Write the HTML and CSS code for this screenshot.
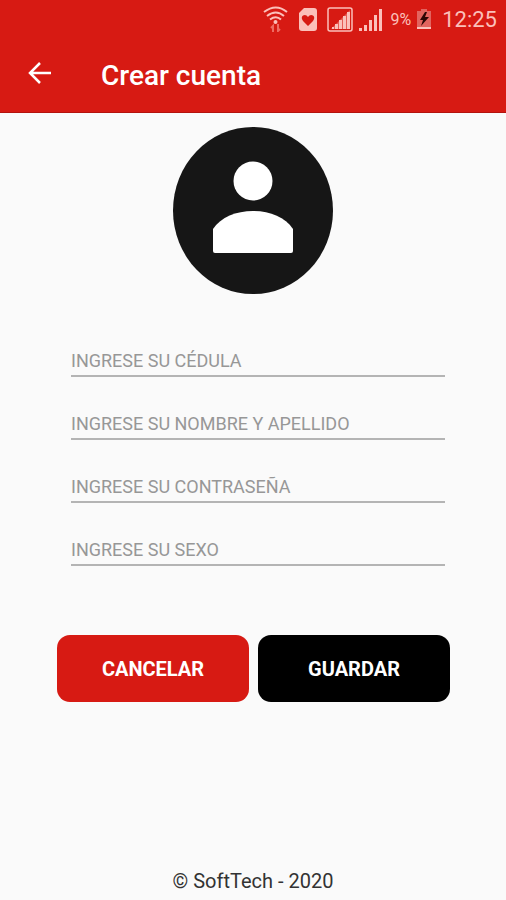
FILE: index.html
```html
<!DOCTYPE html>
<html lang="es">
  <head>
    <meta charset="utf-8" />
    <meta name="viewport" content="width=device-width, initial-scale=1" />
    <title>Crear cuenta</title>
    <link rel="stylesheet" href="styles.css">
  </head>
  <body>
    <header class="header">
      <div class="status-bar">
        <svg class="status-wifi" width="26" height="26" viewBox="0 0 26 26" fill="none" stroke="currentColor" stroke-width="2">
          <path d="M1 6Q13 -3 24 6M4 10Q13 3 21 10M7 13.500Q13 9 18 13.500" />
          <circle cx="12.500" cy="16" r="2" fill="currentColor" stroke="none" />
          <path class="wifi-traffic" d="M10 26V20L8 22M15 18V25L17 23" />
        </svg>
        <svg class="status-heart" width="18" height="23" viewBox="0 0 18 23">
          <path d="M5 0H15Q18 0 18 3V20Q18 23 15 23H3Q0 23 0 20V5Z" fill="currentColor" />
          <path class="heart" d="M9 18L4 13Q1.500 9.500 4 7.500Q7 6 9 9Q11 6 14 7.500Q16.500 9.500 14 13Z" />
        </svg>
        <svg class="status-sim" width="26" height="25" viewBox="0 0 26 25">
          <rect x="1" y="1" width="24" height="23" rx="2" fill="none" stroke="currentColor" stroke-width="1.500" />
          <path d="M4 22L23 3V22Z" fill="currentColor" opacity="0.400" />
          <path d="M5 22V20H7V22ZM8 22V17H11V22ZM12 22V13H15V22ZM16 22V9H19V22ZM20 22V5H23V22Z" fill="currentColor" />
        </svg>
        <svg class="status-signal" width="24" height="23" viewBox="0 0 24 23" fill="currentColor">
          <path d="M0 23V20H3V23ZM5 23V17H8V23ZM10 23V12H13V23ZM15 23V7H18V23ZM20 23V1H23V23Z" />
        </svg>
        <span class="battery-level">9%</span>
        <svg class="status-battery" width="14" height="20" viewBox="0 0 14 20">
          <path class="battery-body" d="M4 0H10V2H14V18H0V2H4Z" />
          <path d="M0 18H14V20H0Z" fill="currentColor" />
          <path class="bolt" d="M8 3L3 11H6L4 17L12 8H8L10 3Z" />
        </svg>
        <time class="clock">12:25</time>
      </div>
      <div class="toolbar">
        <button type="button" class="back" aria-label="Volver">
          <svg width="24" height="24" viewBox="0 0 24 24" fill="none" stroke="currentColor" stroke-width="2.500">
            <path d="M23 12H2M12 2L2 12L12 22" />
          </svg>
        </button>
        <h1 class="title">Crear cuenta</h1>
      </div>
    </header>

    <main class="content">
      <svg class="avatar" width="162" height="168" viewBox="0 0 162 168">
        <ellipse cx="80" cy="83.500" rx="80" ry="83.500" fill="#161616" />
        <circle cx="80" cy="54" r="19.500" fill="#fff" />
        <path d="M40 124V102C48 90 63 84 80 84C97 84 112 90 120 102V124Q120 126 118 126H42Q40 126 40 124Z" fill="#fff" />
      </svg>

      <form class="form">
        <div class="fields">
          <input class="field" type="text" placeholder="INGRESE SU CÉDULA" aria-label="Cédula" />
          <input class="field" type="text" placeholder="INGRESE SU NOMBRE Y APELLIDO" aria-label="Nombre y apellido" />
          <input class="field" type="password" placeholder="INGRESE SU CONTRASEÑA" aria-label="Contraseña" />
          <input class="field" type="text" placeholder="INGRESE SU SEXO" aria-label="Sexo" />
        </div>
        <div class="actions">
          <button type="button" class="btn btn-cancel">CANCELAR</button>
          <button type="submit" class="btn btn-save">GUARDAR</button>
        </div>
      </form>
    </main>

    <footer class="footer">© SoftTech - 2020</footer>
  </body>
</html>
```

FILE: styles.css
```css
* {
  box-sizing: border-box;
}

body {
  display: flex;
  flex-direction: column;
  min-height: 100vh;
  margin: 0;
  background: #fafafa;
  font-family: Roboto, "Liberation Sans", sans-serif;
}

.header {
  background: #d71a13;
  border-bottom: 1px solid #b3130e;
  color: #fff;
}

/* status bar */
.status-bar {
  display: flex;
  justify-content: flex-end;
  align-items: center;
  height: 38px;
  padding-right: 9px;
  color: #fbc0ba;
}

.status-wifi {
  margin-right: 10px;
}

.wifi-traffic {
  stroke: #ee6b63;
}

.status-heart {
  margin-right: 10px;
}

.heart {
  fill: #d71a13;
}

.status-sim {
  margin-right: 6px;
}

.status-signal {
  margin-right: 7px;
}

.battery-level {
  margin-right: 6px;
  font-size: 16px;
}

.battery-body {
  fill: #e2645f;
}

.bolt {
  fill: #2a0504;
}

.status-battery {
  margin-right: 11px;
}

.clock {
  font-size: 22px;
}

/* toolbar */
.toolbar {
  display: flex;
  align-items: center;
  height: 74px;
  padding: 0 28px;
}

.back {
  display: flex;
  margin: 0 49px 4px 0;
  padding: 0;
  border: 0;
  background: none;
  color: inherit;
}

.title {
  margin: 0;
  font-size: 28px;
  font-weight: 500;
}

/* form */
.content {
  flex: 1;
  display: flex;
  flex-direction: column;
  align-items: center;
  padding: 14px 56px 0 57px;
}

.form {
  width: 100%;
  margin-top: 19px;
}

.fields {
  display: flex;
  flex-direction: column;
  padding: 0 5px 0 14px;
}

.field {
  width: 100%;
  height: 63px;
  padding: 31px 0 0;
  border: 0;
  border-bottom: 2px solid #b4b4b4;
  border-radius: 0;
  outline: none;
  background: none;
  color: #222;
  font: 18px Roboto, "Liberation Sans", sans-serif;
}

.field::placeholder {
  color: #979797;
  opacity: 1;
}

.actions {
  display: flex;
  gap: 9px;
  margin-top: 69px;
}

.btn {
  flex: 1;
  height: 67px;
  padding: 0;
  border: 0;
  border-radius: 13px;
  color: #fff;
  font: bold 20px Roboto, "Liberation Sans", sans-serif;
}

.btn-cancel {
  background: #d71a13;
}

.btn-save {
  background: #000;
}

.footer {
  padding-bottom: 7px;
  color: #333;
  font-size: 20px;
  line-height: 24px;
  text-align: center;
}
```
